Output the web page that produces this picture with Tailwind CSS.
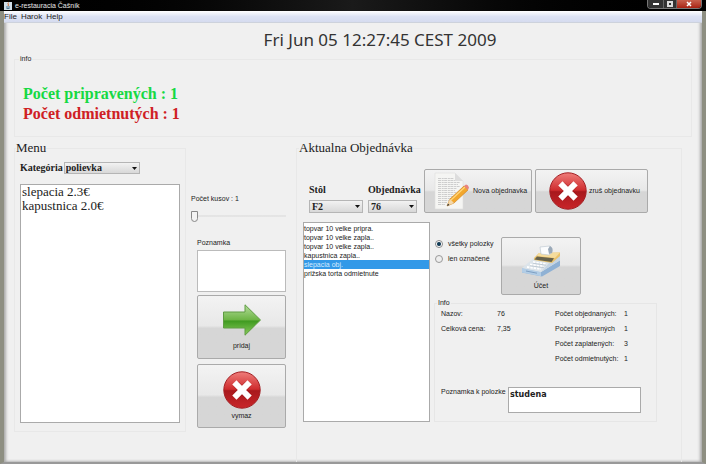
<!DOCTYPE html>
<html lang="sk">
<head>
<meta charset="utf-8">
<meta name="viewport" content="width=device-width, initial-scale=1">
<title>e-restauracia Čašník</title>
<script src="https://cdn.jsdelivr.net/npm/@tailwindcss/browser@4"></script>
</head>
<body class="flex min-h-screen flex-col bg-[#f0f0f0] font-['Liberation_Sans',Arial,sans-serif] text-[7px] leading-[10px] text-[#222]">
<svg class="absolute size-0" aria-hidden="true">
  <defs>
    <linearGradient id="red" x1="0" y1="0" x2="0" y2="1"><stop offset="0" stop-color="#ef7d7a"/><stop offset=".48" stop-color="#cf2c2e"/><stop offset=".52" stop-color="#a8191d"/><stop offset="1" stop-color="#c92529"/></linearGradient>
    <linearGradient id="green" x1="0" y1="0" x2="0" y2="1"><stop offset="0" stop-color="#b5dd9c"/><stop offset=".5" stop-color="#6cb444"/><stop offset=".53" stop-color="#3f9a20"/><stop offset="1" stop-color="#8acb5c"/></linearGradient>
    <symbol id="cancel" viewBox="0 0 38 38">
      <circle cx="19" cy="19" r="18.2" fill="url(#red)" stroke="#a32024"/>
      <path d="M13 13 25 25M25 13 13 25" stroke="#8f1518" stroke-width="7.4" opacity=".4"/>
      <path d="M13.500 13.500 24.500 24.500M24.500 13.500 13.500 24.500" stroke="#fff" stroke-width="6" stroke-linecap="square"/>
    </symbol>
  </defs>
</svg>

<header class="flex h-[11px] items-center justify-between bg-linear-to-r from-black via-[#1a1a1a] to-black px-1 text-white">
  <h1 class="flex items-center gap-[3px] text-[7px] leading-[10px] text-[#e8e8e8]">
    <svg class="size-[8px]" viewBox="0 0 8 8" aria-hidden="true"><rect width="8" height="8" fill="#cfdde8"/><path d="M4.500 .5C3 2 5.500 2.500 4 4" fill="none" stroke="#d0662a"/><path d="M2 5h4M2.500 6.500h3" stroke="#4b7794"/></svg>
    e-restauracia Čašník
  </h1>
  <div class="flex h-[9px] self-start overflow-hidden rounded-b-sm border border-t-0 border-[#777]">
    <button class="flex w-[15px] items-center justify-center bg-[#333]" aria-label="Minimalizovať"><span class="h-[2px] w-[6px] bg-white"></span></button>
    <button class="flex w-[14px] items-center justify-center border-x border-[#666] bg-[#333]" aria-label="Maximalizovať"><span class="size-[6px] border-2 border-[#ddd]"></span></button>
    <button class="flex w-[24px] items-center justify-center bg-linear-to-b from-[#c7604d] to-[#a81f10]" aria-label="Zavrieť"><svg class="size-[6px]" viewBox="0 0 6 6"><path d="M1 1 5 5M5 1 1 5" stroke="#fff" stroke-width="1.500"/></svg></button>
  </div>
</header>

<div class="flex flex-1 flex-col border-x-4 border-b-2 border-x-[#8e8f82] border-b-[#999] shadow-[inset_2px_0_3px_#aaa,inset_-2px_0_3px_#aaa]">
  <nav class="flex h-3 items-center gap-1 border-b border-[#cdd2dc] bg-linear-to-b from-white via-[#dde3f4] to-[#d5dbef] text-[8px]">
    <a href="#file">File</a><a href="#harok">Harok</a><a href="#help">Help</a>
  </nav>

  <time class="mt-[5px] pl-[54px] text-center font-['Noto_Sans',sans-serif] text-[17px] leading-6 text-[#333]">Fri Jun 05 12:27:45 CEST 2009</time>

  <fieldset class="mx-[10px] mt-[2px] border border-[#e8e8e8] px-2 pb-3">
    <legend class="-ml-1 px-px">info</legend>
    <div class="pt-[20px] font-['Liberation_Serif',serif] text-[16px] leading-5 font-bold">
      <p class="text-[#16d943]">Počet pripravených : 1</p>
      <p class="text-[#cf2024]">Počet odmietnutých : 1</p>
    </div>
  </fieldset>

  <main class="flex flex-1 pr-[20px] pl-[10px]">
    <fieldset class="mt-[3px] mb-[30px] flex w-[172px] flex-col border border-[#e8e8e8] px-[5px] pb-2">
      <legend class="-ml-1 font-['Liberation_Serif',serif] text-[13px] leading-4">Menu</legend>
      <div class="flex h-full flex-1 flex-col">
        <div class="mt-[6px] flex items-center gap-px font-['Liberation_Serif',serif] text-[10px] font-bold">
          <label for="category">Kategória</label>
          <span class="relative">
            <select id="category" class="h-3 w-[76px] appearance-none border border-[#b5b5b5] bg-linear-to-b from-[#f2f2f2] to-[#d8d8d8] px-px leading-[10px]"><option>polievka</option></select>
            <svg class="pointer-events-none absolute top-[5px] right-[3px] h-[3px] w-[5px]" viewBox="0 0 5 3"><path d="M0 0h5L2.500 3z" fill="#111"/></svg>
          </span>
        </div>
        <ul role="listbox" aria-label="Menu" class="mt-[10px] flex-1 border border-[#aaa] bg-white px-px font-['Liberation_Serif',serif] text-[13px] leading-[14px]">
          <li role="option">slepacia 2.3€</li>
          <li role="option">kapustnica 2.0€</li>
        </ul>
      </div>
    </fieldset>

    <section class="ml-[5px] flex w-[95px] flex-col pt-[57px]" aria-label="Pridanie položky">
      <label for="pieces">Počet kusov : 1</label>
      <input id="pieces" type="range" min="1" max="20" value="1" class="mt-[6px] h-3 w-full appearance-none bg-linear-to-b from-transparent from-45% via-[#aaa] via-50% to-transparent to-55% [&::-webkit-slider-thumb]:h-[11px] [&::-webkit-slider-thumb]:w-[7px] [&::-webkit-slider-thumb]:appearance-none [&::-webkit-slider-thumb]:rounded-b-full [&::-webkit-slider-thumb]:border [&::-webkit-slider-thumb]:border-[#888] [&::-webkit-slider-thumb]:bg-[#f3f3f3]">
      <div class="mt-4 ml-[6px] flex flex-col">
        <label for="note">Poznamka</label>
        <textarea id="note" class="mt-[2px] h-[42px] resize-none border border-[#bbb] bg-white"></textarea>
        <button class="mt-[3px] flex h-16 flex-col items-center justify-center gap-[5px] rounded-[2px] border border-[#aaa] bg-linear-to-b from-[#f3f3f3] from-0% via-[#e8e8e8] via-48% to-[#d6d6d6] to-52%">
          <svg class="h-8 w-[38px]" viewBox="0 0 38 32" aria-hidden="true"><path d="M.5 8H22V.8L37.500 16 22 31.200V24H.5z" fill="url(#green)" stroke="#5e9c42"/></svg>
          pridaj
        </button>
        <button class="mt-[5px] flex h-16 flex-col items-center justify-center gap-[2px] rounded-[2px] border border-[#aaa] bg-linear-to-b from-[#f3f3f3] from-0% via-[#e8e8e8] via-48% to-[#d6d6d6] to-52%">
          <svg class="size-[38px]" aria-hidden="true"><use href="#cancel"/></svg>
          vymaz
        </button>
      </div>
    </section>

    <fieldset class="mt-[3px] ml-[10px] flex flex-1 flex-col border border-b-0 border-[#e8e8e8] px-[6px]">
      <legend class="-ml-1 font-['Liberation_Serif',serif] text-[13px] leading-4">Aktualna Objednávka</legend>
      <div class="flex gap-[3px] pt-[13px] pl-[6px]">
        <div class="mr-1 flex gap-[5px] pt-4 font-['Liberation_Serif',serif] text-[10px] font-bold">
          <div class="flex flex-col gap-[5px]">
            <label for="table">Stôl</label>
            <span class="relative">
              <select id="table" class="h-[13px] w-[54px] appearance-none border border-[#b5b5b5] bg-linear-to-b from-[#f2f2f2] to-[#d8d8d8] px-[2px] leading-[11px]"><option>F2</option></select>
              <svg class="pointer-events-none absolute top-[5px] right-[3px] h-[3px] w-[5px]" viewBox="0 0 5 3"><path d="M0 0h5L2.500 3z" fill="#111"/></svg>
            </span>
          </div>
          <div class="flex w-[49px] flex-col gap-[5px]">
            <label for="order">Objednávka</label>
            <span class="relative">
              <select id="order" class="h-[13px] w-full appearance-none border border-[#b5b5b5] bg-linear-to-b from-[#f2f2f2] to-[#d8d8d8] px-[2px] leading-[11px]"><option>76</option></select>
              <svg class="pointer-events-none absolute top-[5px] right-[3px] h-[3px] w-[5px]" viewBox="0 0 5 3"><path d="M0 0h5L2.500 3z" fill="#111"/></svg>
            </span>
          </div>
        </div>
        <button class="flex h-11 w-[108px] items-center gap-1 rounded-[2px] border border-[#aaa] bg-linear-to-b from-[#f3f3f3] from-0% via-[#e8e8e8] via-48% to-[#d6d6d6] to-52% pl-[9px] whitespace-nowrap">
          <svg class="h-[38px] w-[35px]" viewBox="0 0 35 38" aria-hidden="true"><path d="M1 1H21L29 9V37H1z" fill="#f5f5f3" stroke="#ddd" stroke-width=".6"/><path d="M21 1V9H29z" fill="#ddd"/><path d="M4 6.500H20M4 8.500H21M4 10.500H26M4 12.500H24M4 14.500H26M4 16.500H23M4 18.500H21M4 20.500H22M4 22.500H20M4 24.500H19M4 26.500H17M4 28.500H15M4 30.500H13M4 32.500H11" stroke="#cdcdcd" stroke-dasharray="3 .7 2 .5"/><path d="m13 34 3-7L30 14l4 4-14 13z" fill="#f2a72d" stroke="#cc7d18" stroke-width=".6"/><path d="m17 28 14-13" stroke="#ffd77c" stroke-width="1.200"/><path d="m13 34 3-7 4 4z" fill="#f3d8ab"/><path d="m13 34 1-2.500L15.500 33z" fill="#333"/><path d="m30 14 2-1.500q2 0 3 3L34 18z" fill="#e8837d"/></svg>
          Nova objednavka
        </button>
        <button class="flex h-11 w-[113px] items-center gap-[2px] rounded-[2px] border border-[#aaa] bg-linear-to-b from-[#f3f3f3] from-0% via-[#e8e8e8] via-48% to-[#d6d6d6] to-52% pl-[13px] whitespace-nowrap">
          <svg class="size-[38px]" aria-hidden="true"><use href="#cancel"/></svg>
          zruš objednavku
        </button>
      </div>

      <div class="mt-[9px] flex">
        <ul role="listbox" aria-label="Položky objednávky" class="w-[127px] border border-[#aaa] bg-white pt-px leading-[9px]">
          <li role="option">topvar 10 velke pripra.</li>
          <li role="option">topvar 10 velke zapla..</li>
          <li role="option">topvar 10 velke zapla..</li>
          <li role="option">kapustnica zapla..</li>
          <li role="option" aria-selected="true" class="bg-[#3399e8] text-[#d6ecff]">slepacia obj.</li>
          <li role="option">prižska torta odmietnute</li>
        </ul>
        <div class="flex flex-1 flex-col pt-[15px] pl-1">
          <div class="flex">
            <div class="flex w-[67px] flex-col gap-[5px] pt-[2px] pl-px whitespace-nowrap">
              <label class="flex items-center gap-[5px]"><input type="radio" name="scope" checked class="size-2 appearance-none rounded-full border border-[#888] bg-white bg-radial from-[#123c56] from-35% to-white to-60%">všetky polozky</label>
              <label class="flex items-center gap-[5px]"><input type="radio" name="scope" class="size-2 appearance-none rounded-full border border-[#999] bg-[#eee]">len označené</label>
            </div>
            <button class="flex h-[58px] w-20 flex-col items-center justify-end gap-1 rounded-[2px] border border-[#aaa] bg-linear-to-b from-[#f3f3f3] from-0% via-[#e8e8e8] via-48% to-[#d6d6d6] to-52% pb-[3px]">
              <svg class="h-8 w-[40px]" viewBox="4 7 40 32" aria-hidden="true">
                <path d="M5 30 24 34 43 22V28L25 38.500 5 34.500z" fill="#8fb1d4"/>
                <path d="M5 30 24 34V38.300L5 34.500z" fill="#b2cde6"/>
                <path d="M9 33 20 35.200" stroke="#7e9fc2"/>
                <path d="M5 30 17 20 39 21 43 22 24 34z" fill="#dce4ea"/>
                <path d="M24 34 34 23 43 15V22.500z" fill="#c5d4e2"/>
                <path d="M17 20 22 15 43 14.500V18L35 25 17 22z" fill="#e9c26c"/>
                <path d="M22 15 43 14.500 38 20 20 18z" fill="#f5dc9c"/>
                <path d="M20 18.500 37 20.200 34.500 24 17.500 21.500z" fill="#66624c"/>
                <path d="M24 16 23 9 33 8 35 14.500 32 17z" fill="#fbfcfd" stroke="#b9c4ce" stroke-width=".6"/>
                <path d="M33 8Q37 10 35 15L32 16 31 11z" fill="#9aa9b8"/>
                <path d="M16 24 29 26M13 26.500 27 28.500M10 29 24 31" stroke="#fff" stroke-width="1.800" stroke-dasharray="2.400 1"/>
                <path d="M16 25.200 29 27.200M13 27.700 27 29.700" stroke="#aab7c2" stroke-width=".6"/>
              </svg>
              Účet
            </button>
          </div>
          <fieldset class="mt-[3px] mr-[18px] border border-[#e6e6e6] px-[6px] pb-2">
            <legend class="-ml-1 px-px">Info</legend>
            <div class="flex h-[79px] pt-px leading-[10px] whitespace-nowrap">
              <dl class="grid w-[114px] grid-cols-[56px_1fr] content-start gap-y-[5px]"><dt>Nazov:</dt><dd>76</dd><dt>Celková cena:</dt><dd>7,35</dd></dl>
              <dl class="grid flex-1 grid-cols-[69px_1fr] content-start gap-y-[5px]"><dt>Počet objednaných:</dt><dd>1</dd><dt>Počet pripravených</dt><dd>1</dd><dt>Počet zaplatených:</dt><dd>3</dd><dt>Počet odmietnutých:</dt><dd>1</dd></dl>
            </div>
            <div class="flex whitespace-nowrap">
              <label for="item-note" class="w-[67px]">Poznamka k polozke</label>
              <textarea id="item-note" class="h-[26px] w-[133px] resize-none border border-[#aaa] bg-white px-px py-[2px] font-['DejaVu_Sans',sans-serif] text-[8px] leading-[9px] font-bold">studena</textarea>
            </div>
          </fieldset>
        </div>
      </div>
    </fieldset>
  </main>
</div>
</body>
</html>
